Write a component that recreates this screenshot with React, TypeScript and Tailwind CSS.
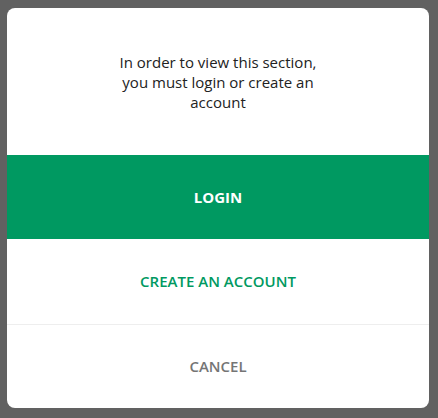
export default function App() {
  return (
    <div
      className="min-h-[418px] w-[438px] bg-[#616161] pt-[8px] pl-[7px] pr-[9px] pb-[10px]"
      style={{ fontFamily: '"Open Sans", sans-serif' }}
    >
      <div className="flex w-[422px] flex-col overflow-hidden rounded-[8px] bg-white">
        <div className="flex h-[147px] items-center justify-center">
          <p className="w-[205px] text-center text-[15px] leading-[20px] text-[#222]">
            In order to view this section, you must login or create an account
          </p>
        </div>
        <button className="flex h-[84px] items-center justify-center bg-[#009961] text-[15px] font-bold text-white">
          LOGIN
        </button>
        <button className="flex h-[85px] items-center justify-center text-[15px] font-semibold text-[#009961]">
          CREATE AN ACCOUNT
        </button>
        <div className="h-px bg-[#eeeeee]" />
        <button className="flex h-[83px] items-center justify-center text-[15px] font-semibold text-[#757575]">
          CANCEL
        </button>
      </div>
    </div>
  );
}
